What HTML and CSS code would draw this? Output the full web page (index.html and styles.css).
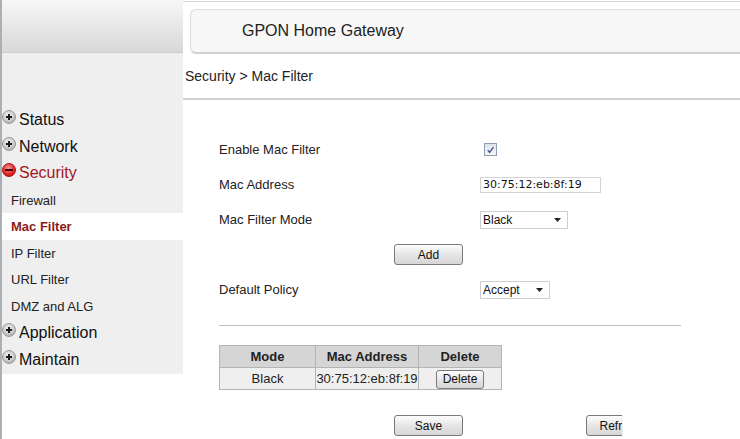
FILE: index.html
```html
<!DOCTYPE html>
<html lang="en">
<head>
  <meta charset="UTF-8" />
  <meta name="viewport" content="width=device-width, initial-scale=1.0" />
  <title>GPON Home Gateway - Mac Filter</title>
  <link rel="stylesheet" href="styles.css">
</head>
<body>
<div class="page">
  <aside class="sidebar">
    <div class="logo-area"></div>
    <ul class="menu">
      <li class="menu-main"><span class="ball"></span>Status</li>
      <li class="menu-main"><span class="ball"></span>Network</li>
      <li class="menu-main open"><span class="ball red"></span>Security</li>
      <li class="menu-sub">Firewall</li>
      <li class="menu-sub active">Mac Filter</li>
      <li class="menu-sub">IP Filter</li>
      <li class="menu-sub">URL Filter</li>
      <li class="menu-sub">DMZ and ALG</li>
      <li class="menu-main"><span class="ball"></span>Application</li>
      <li class="menu-main"><span class="ball"></span>Maintain</li>
    </ul>
  </aside>

  <main class="main">
    <div class="top-strip">
      <div class="title-box">GPON Home Gateway</div>
    </div>
    <div class="crumb">Security &gt; Mac Filter</div>

    <div class="content">
      <div class="row">
        <label class="lbl">Enable Mac Filter</label>
        <span class="check">
          <svg width="12" height="12" viewBox="0 0 12 12">
            <path d="M3 6.2 L5 8.6 L9.2 2.8" fill="none" stroke="#3b4f86" stroke-width="1.4"/>
          </svg>
        </span>
      </div>
      <div class="row">
        <label class="lbl">Mac Address</label>
        <input class="txt" type="text" value="30:75:12:eb:8f:19">
      </div>
      <div class="row">
        <label class="lbl">Mac Filter Mode</label>
        <span class="sel sel-mode">
          <select><option>Black</option><option>White</option></select>
          <svg class="arrow" width="7" height="4" viewBox="0 0 7 4"><path d="M0 0 H7 L3.5 4 Z" fill="#222"/></svg>
        </span>
      </div>
      <div class="row">
        <button class="btn btn-add">Add</button>
      </div>
      <div class="row">
        <label class="lbl">Default Policy</label>
        <span class="sel sel-policy">
          <select><option>Accept</option><option>Drop</option></select>
          <svg class="arrow" width="7" height="4" viewBox="0 0 7 4"><path d="M0 0 H7 L3.5 4 Z" fill="#222"/></svg>
        </span>
      </div>

      <hr class="sep">

      <table class="list">
        <tr>
          <th class="c-mode">Mode</th>
          <th class="c-mac">Mac Address</th>
          <th class="c-del">Delete</th>
        </tr>
        <tr>
          <td>Black</td>
          <td>30:75:12:eb:8f:19</td>
          <td><button class="btn btn-del">Delete</button></td>
        </tr>
      </table>

      <div class="actions">
        <button class="btn btn-save">Save</button>
        <div class="clip"><button class="btn btn-refresh">Refresh</button></div>
      </div>
    </div>
  </main>
</div>
</body>
</html>
```

FILE: styles.css
```css
body {
  margin: 0;
  font-family: "Liberation Sans", Arial, sans-serif;
  color: #222;
  background: #fff;
}
.page {
  display: flex;
  min-height: 439px;
  border-left: 2px solid #a9b0b8;
  overflow: hidden;
}

/* left menu */
.sidebar {
  width: 181px;
  flex-shrink: 0;
}
.logo-area {
  height: 52px;
  background: linear-gradient(#f7f7f7, #d8d8d8);
  border-bottom: 1px solid #cfcfcf;
}
.menu {
  margin: 0;
  padding: 54px 0 0 0;
  list-style: none;
  background: #efefef;
  height: 267px;
}
.menu li {
  height: 26.6px;
  display: flex;
  align-items: center;
}
.menu-main {
  font-size: 16px;
  color: #111;
}
.menu-main.open {color: #a3161c;}
.menu-sub {
  font-size: 13px;
  padding-left: 9px;
}
.menu-sub.active {
  background: #fff;
  color: #8e1a1a;
  font-weight: bold;
}
.ball {
  flex: 0 0 12px;
  height: 12px;
  border-radius: 50%;
  margin: -6px 3px 0 0;
  position: relative;
  border: 1px solid #9a9a9a;
  background: radial-gradient(circle at 45% 35%, #f4f4f4, #c4c4c4 60%, #8f8f8f);
}
.ball::before,
.ball::after {
  content: "";
  position: absolute;
  background: #1a1a1a;
}
.ball::before {left: 3px; top: 5px; width: 6px; height: 2px;}
.ball::after {left: 5px; top: 3px; width: 2px; height: 6px;}
.ball.red {
  border-color: #b01010;
  background: radial-gradient(circle at 45% 35%, #ff9a9a, #de2222 60%, #a00d0d);
}
.ball.red::before {background: #4a0404; left: 2px; width: 8px;}
.ball.red::after {display: none;}

/* right side */
.main {
  flex: 1;
}
.top-strip {
  border-top: 1px solid #d8d8d8;
  padding: 7px 0 0 7px;
  margin-top: 1px;
}
.title-box {
  height: 42px;
  margin-right: -10px;
  border: 1px solid #dcdcdc;
  border-bottom: 2px solid #d0d0d0;
  border-radius: 6px;
  background: #f7f7f7;
  font-size: 16px;
  padding-left: 51px;
  display: flex;
  align-items: center;
}
.crumb {
  font-size: 14px;
  height: 44px;
  display: flex;
  align-items: center;
  padding-left: 2px;
  border-bottom: 2px solid #d2d2d2;
}

.content {
  padding: 32px 0 0 36px;
  font-size: 13px;
}
.row {
  height: 35px;
  display: flex;
  align-items: center;
}
.lbl {width: 262px;}
.check {
  width: 11px;
  height: 11px;
  margin-left: 3px;
  border: 1px solid #8e9db3;
  background: linear-gradient(#dfe3ea, #f6f7f9);
  display: flex;
  align-items: center;
  justify-content: center;
}
.txt {
  width: 115px;
  height: 14px;
  padding: 0 2px;
  margin: 0 0 0 -1px;
  border: 1px solid #d3d3d3;
  font-family: "DejaVu Sans", Verdana, sans-serif;
  font-size: 11px;
  color: #111;
}
.sel {
  position: relative;
  display: inline-block;
  margin-left: -1px;
}
.sel select {
  appearance: none;
  height: 18px;
  border: 1px solid #cfcfcf;
  background: #fff;
  font-family: "Liberation Sans", Arial, sans-serif;
  font-size: 12px;
  padding: 0 2px;
  color: #111;
}
.sel-mode select {width: 88px;}
.sel-policy select {width: 70px;}
.sel .arrow {
  position: absolute;
  right: 7px;
  top: 7px;
}

.btn {
  font-family: "Liberation Sans", Arial, sans-serif;
  font-size: 12px;
  color: #111;
  border: 1px solid #7a7a7a;
  border-radius: 3px;
  background: linear-gradient(#fdfdfd, #e6e6e6 50%, #d6d6d6);
  height: 21px;
  padding: 0;
}
.btn-add {
  width: 69px;
  margin-left: 175px;
}

.sep {
  width: 462px;
  margin: 18px 0 0 0;
  border: none;
  border-top: 1px solid #bdbdbd;
}

.list {
  margin-top: 19px;
  border-collapse: collapse;
  border: 1px solid #c4c4c4;
  text-align: center;
}
.list th,
.list td {
  border: 1px solid #b4b4b4;
  height: 21px;
  padding: 0;
}
.list th {
  background: #d5d5d5;
  font-weight: bold;
}
.list td {background: #efefef;}
.c-mode {width: 95px;}
.c-mac {width: 102px;}
.c-del {width: 82px;}
.btn-del {
  width: 48px;
  height: 19px;
  font-size: 12px;
  margin-top: 1px;
}

.actions {
  margin-top: 25px;
  display: flex;
}
.btn-save {
  width: 69px;
  margin-left: 175px;
}
.clip {
  width: 36px;
  overflow: hidden;
  margin-left: 123px;
  border-right: 1px solid #f2f2f2;
}
.btn-refresh {width: 69px;}
```
